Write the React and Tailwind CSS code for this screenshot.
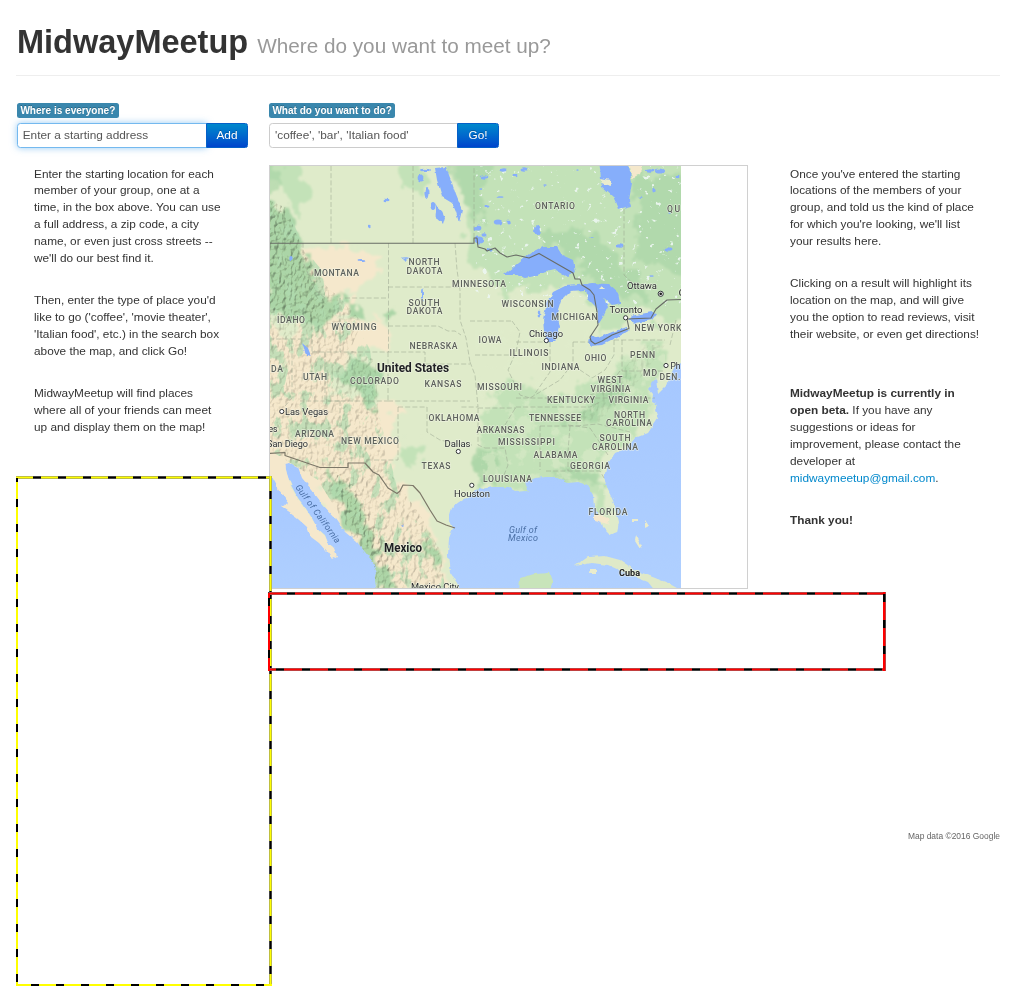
import React from "react";

const GREEN = "#c3e2b8";
const DEEP = "#a5d3a3";
const SAND = "#f5e8cc";
const LAKE = "#86aefb";

// [text, centre x, baseline y, width]
const states = [
  ["ONTARIO", 555, 208.7, 40],
  ["QU", 673.5, 212, 13],
  ["MONTANA", 336.5, 276.2, 45],
  ["NORTH", 424, 265, 31],
  ["DAKOTA", 424.5, 273.5, 36],
  ["MINNESOTA", 479, 286.5, 54],
  ["SOUTH", 424, 305.7, 31],
  ["DAKOTA", 424.5, 314.3, 36],
  ["IDAHO", 291, 323, 28],
  ["WYOMING", 354, 329.5, 45],
  ["WISCONSIN", 527.5, 306.7, 52],
  ["MICHIGAN", 574.5, 319.5, 46],
  ["NEBRASKA", 433.5, 349, 48],
  ["IOWA", 490, 343.2, 23],
  ["ILLINOIS", 529, 356, 39],
  ["NEW YORK", 658, 331.3, 47],
  ["INDIANA", 560.5, 370, 38],
  ["OHIO", 595.5, 361, 22],
  ["PENN", 642.5, 357.5, 25],
  ["DA", 277, 371.5, 12],
  ["UTAH", 315, 379.5, 24],
  ["COLORADO", 374.5, 384.2, 49],
  ["KANSAS", 443, 387, 37],
  ["MISSOURI", 499.5, 389.5, 45],
  ["WEST", 610, 383.3, 25],
  ["VIRGINIA", 610.5, 392, 40],
  ["KENTUCKY", 571, 403.3, 48],
  ["VIRGINIA", 628.5, 403.3, 40],
  ["MD", 650, 376, 14],
  ["DEN.", 670, 379.5, 21],
  ["OKLAHOMA", 454, 421, 51],
  ["TENNESSEE", 555, 420.8, 52],
  ["NORTH", 629.5, 417.5, 31],
  ["CAROLINA", 629, 426, 46],
  ["ARIZONA", 314.5, 437, 39],
  ["NEW MEXICO", 370, 443.7, 58],
  ["ARKANSAS", 500.5, 432.7, 48],
  ["MISSISSIPPI", 526.5, 444.5, 57],
  ["SOUTH", 615, 441.3, 31],
  ["CAROLINA", 615, 450, 46],
  ["ALABAMA", 555.5, 457.5, 44],
  ["TEXAS", 436, 469, 29],
  ["GEORGIA", 590, 468.5, 40],
  ["LOUISIANA", 507.5, 482, 49],
  ["FLORIDA", 608, 515, 39],
];

const cities = [
  ["Ottawa", 642, 289.3, 30],
  ["Toronto", 626, 313.3, 33],
  ["Chicago", 546, 336.8, 34],
  ["Las Vegas", 306.5, 415, 43],
  ["es", 273, 432, 9],
  ["San Diego", 287.5, 447.3, 41],
  ["Dallas", 457.5, 447.3, 26],
  ["Houston", 472, 497.3, 36],
  ["Ph", 675.5, 368.5, 10],
  ["C", 682, 296, 7],
  ["Mexico City", 435, 590, 48],
];

const dots = [
  [625.6, 317.8], [546.3, 340.6], [281.8, 411.5], [458.3, 451.5],
  [471.8, 485.3], [666, 365.5],
];

// small northern lakes: [x, y, rx, ry]
const ponds = [
  [484, 177, 5, 2], [503, 170, 4, 2], [524, 169, 4, 2], [515, 176, 3, 1.5],
  [480, 190, 2, 1], [500, 196, 3, 1], [487, 206, 3, 2], [498, 222, 5, 3],
  [508, 222, 2, 3], [478, 228, 4, 3], [479, 240, 5, 4], [484, 235, 3, 2],
  [489, 250, 3, 2], [537.5, 230.5, 4, 6.5], [577, 170, 2, 1], [545, 185, 2, 1],
  [620, 246, 4, 2], [668, 249, 4, 2], [660, 171, 6, 3], [650, 170, 5, 2],
  [654, 190, 2, 3], [677, 176, 3, 1.5], [592, 237, 2, 1], [641, 198, 2, 1],
  [670, 213, 2, 1], [651, 276, 2, 1], [386, 200, 3, 1.5], [369, 227, 2, 1.5],
  [291, 258, 2, 2.5], [361, 260, 4, 1.2], [425, 170, 6, 1.5], [403, 525, 2, 1],
  [421, 178, 4, 4], [427, 193, 3, 7], [433, 206, 3, 6], [440, 215, 4, 7],
  [405, 258, 5, 1], [405, 260, 2, 2], [423, 295, 1.2, 8], [539, 314, 1.5, 4],
];

const stateLines =
  "M331 166V243M413 166V243M388.5 243V352M345 298H388M388 287H458M388 326H438L448 331H455L461 335M455 243L457 270L460 290V320L466 338L470 362M269 339H312V352M312 352H340M340 298V352H425V364H470M292 339V398L285 406M325 352V401H388M340 401V460M388 352V402M388 401H470M398 407H427V432L440 440L458 444L472 445M398 407V460H365M340 401H300M325 298L315 290L303 262V243M470 362L475 375L478 407H460M478 408H516M470 321H512M512 321L520 332L516 352L508 370L520 395L530 398M475 355H510M516 342H550M550 342V372L534 395M573 342V363L560 380L530 398M573 342H590M614 340V355L605 370L592 378L580 370M614 340H665M622 371H663M622 340V371M620 371L606 390L590 395M516 398H655M516 407H590L600 402M540 426H575L598 424L630 432M540 426V470M570 426L568 452L568 471M485 448H505L508 465L504 475M478 408V445L485 448M505 425L516 407M546 471H600L604 478M568 425L590 428L608 455M624 209V275L640 290M474 238V166M670 345L676 320";

const outlineDash = {
  yellowH: "bg-[repeating-linear-gradient(90deg,#000_0_8px,#ff0_8px_25px)]",
  yellowV: "bg-[repeating-linear-gradient(180deg,#000_0_8px,#ff0_8px_25px)]",
  redH: "bg-[repeating-linear-gradient(90deg,#000_0_8px,#f00_8px_26px)]",
  redV: "bg-[repeating-linear-gradient(180deg,#000_0_8px,#f00_8px_26px)]",
};

function MapArt() {
  return (
    <svg className="block h-[422px] w-[411px]" viewBox="270 166 411 422" role="img" aria-label="Map">
      <defs>
        <filter id="coast" x="-5%" y="-5%" width="110%" height="110%">
          <feTurbulence type="fractalNoise" baseFrequency="0.15" numOctaves="2" seed="4" />
          <feDisplacementMap in="SourceGraphic" scale="4" xChannelSelector="R" yChannelSelector="G" />
        </filter>
        <filter id="rough" x="-10%" y="-10%" width="120%" height="120%">
          <feTurbulence type="fractalNoise" baseFrequency="0.06" numOctaves="4" seed="9" />
          <feDisplacementMap in="SourceGraphic" scale="32" xChannelSelector="R" yChannelSelector="G" />
          <feGaussianBlur stdDeviation="1" />
        </filter>
        <filter id="relief" x="0" y="0" width="100%" height="100%" colorInterpolationFilters="sRGB">
          <feTurbulence type="fractalNoise" baseFrequency="0.26 0.17" numOctaves="3" seed="2" />
          <feDiffuseLighting surfaceScale="2.4" diffuseConstant="1.2" lightingColor="#fffdf6">
            <feDistantLight azimuth="225" elevation="58" />
          </feDiffuseLighting>
          <feComposite operator="in" in2="SourceGraphic" />
        </filter>
        <filter id="woods" x="0" y="0" width="100%" height="100%" colorInterpolationFilters="sRGB">
          <feTurbulence type="fractalNoise" baseFrequency="0.08 0.05" numOctaves="4" seed="16" />
          <feColorMatrix values="0 0 0 0 .69  0 0 0 0 .86  0 0 0 0 .69  9 0 0 0 -4.8" />
          <feComposite operator="in" in2="SourceGraphic" />
        </filter>
        <filter id="clear" x="0" y="0" width="100%" height="100%" colorInterpolationFilters="sRGB">
          <feTurbulence type="fractalNoise" baseFrequency="0.06" numOctaves="4" seed="31" />
          <feColorMatrix values="0 0 0 0 .88  0 0 0 0 .93  0 0 0 0 .8  8 0 0 0 -4.3" />
          <feComposite operator="in" in2="SourceGraphic" />
        </filter>
        <filter id="specks" x="0" y="0" width="100%" height="100%" colorInterpolationFilters="sRGB">
          <feTurbulence type="fractalNoise" baseFrequency="0.16" numOctaves="3" seed="7" />
          <feColorMatrix values="0 0 0 0 .93  0 0 0 0 .97  0 0 0 0 .95  12 0 0 0 -8.2" />
          <feComposite operator="in" in2="SourceGraphic" />
        </filter>
        <linearGradient id="sea" x1="0" y1="0" x2="0" y2="1">
          <stop offset="0" stopColor="#a5c7ff" />
          <stop offset="1" stopColor="#b0d0ff" />
        </linearGradient>
      </defs>
      <rect x="269" y="166" width="413" height="422" fill="#dfebca" />
      <g filter="url(#rough)">
        <path fill={GREEN} d="M255 150H300L305 200L300 225L285 190L255 180ZM455 150H700V320L665 322L640 300L600 335L585 290L560 285L500 296L470 260L468 225L460 190ZM395 150H425V195L405 190Z" />
        <path fill={DEEP} opacity=".6" d="M440 150H490L480 225L462 200ZM535 228L600 235L625 265L650 300L600 290L570 255L540 250ZM630 180L700 170V280L640 260ZM255 150H280V190H260Z" />
        <path fill={SAND} d="M300 248H345L385 262L350 290L340 320L388 325L395 350L345 352L325 395L395 402L400 455L390 470L430 520L448 590H360L330 520L295 470L255 452V330L285 335L310 320L300 290Z" />
        <path fill={GREEN} d="M480 410L512 380L560 395L610 370L645 345L665 345L655 390L645 430L615 450L600 480L612 520L590 500L560 485L520 490L475 490L480 450ZM400 440L420 445L410 470Z" />
        <path fill={DEEP} opacity=".7" d="M560 420L600 395L635 370L625 395L590 422ZM475 450H500L495 485H475ZM545 470H595L600 482H550Z" />
        <path fill={DEEP} opacity=".9" d="M265 200L285 205L300 245L312 275L320 290L340 300L330 325L320 345L312 320L280 315L265 300ZM342 298L358 303L362 318L350 320ZM385 305L395 312L392 320L384 315ZM345 355L365 358L376 375L372 405L358 400L348 385ZM325 465L345 480L375 540L390 588H375L365 550L340 515ZM425 535L435 545L440 575L430 560Z" />
      </g>
      <rect x="475" y="330" width="190" height="165" fill="#fff" filter="url(#clear)" opacity=".5" />
      <rect x="475" y="166" width="207" height="140" fill="#fff" filter="url(#specks)" opacity=".9" />
      <path fill="#fff" filter="url(#woods)" opacity=".7" d="M269 200L290 215L305 250L345 298L370 350L378 410L400 500L440 550L445 588H375L355 540L318 480L269 450Z" />
      <path style={{ mixBlendMode: "multiply" }} opacity=".3" fill="#fff" filter="url(#relief)" d="M269 200L286 208L302 248L325 285L342 300L362 322L350 350L375 360L378 410L388 470L420 515L440 550L445 588H375L355 540L318 480L269 450Z" />
      <path style={{ mixBlendMode: "multiply" }} opacity=".3" fill="#fff" filter="url(#relief)" d="M269 200L286 208L302 248L318 285L325 305L310 325L269 315ZM335 470L350 480L385 545L392 575L375 560L345 515Z" />
      <path style={{ mixBlendMode: "multiply" }} opacity=".15" fill="#fff" filter="url(#relief)" d="M570 425L600 395L645 345L665 345L635 385L600 422Z" />

      <g filter="url(#coast)">
        <path fill="url(#sea)" d="M255 470L272 475L280 490L290 503L282 507L290 512L298 518L308 527L312 537L320 543L328 552L332 558L336 555L333 547L328 543L325 535L317 528L312 518L305 507L298 498L292 487L287 475L285 464L290 463L298 467L302 478L312 490L323 505L335 518L345 532L357 542L365 552L373 562L377 572L375 582L379 600H255Z" />
        <path fill="url(#sea)" d="M465 600L457 583L450 572L448 555L449 538L453 528L449 518L452 508L460 502L468 497L475 490L492 487L508 487L515 491L525 490L529 492L525 483L535 478L545 477L555 477L568 483L578 482L587 485L593 495L594 507L600 517L603 528L610 535L617 532L619 522L615 505L608 490L604 478L607 465L615 453L627 448L635 438L648 433L658 418L655 410L658 405L652 402L653 394L648 388L656 378L658 394L667 385L670 376L676 364L695 355V600Z" />
        {/* Baja California */}
        <path fill={SAND} d="M262 452L285 458L286 470L291 487L298 499L305 508L312 519L318 529L325 536L328 543L334 548L337 556L332 559L327 552L319 543L311 537L307 527L298 519L290 513L281 507L289 503L279 490L271 475L262 468Z" />
        <path fill={LAKE} d="M503 275L518 263L530 253L542 247L557 247L562 255L573 260L575 272L567 277L555 270L542 273L535 276L525 278L515 275ZM545 342L543 320L547 303L553 292L565 286L578 285L592 283L608 284L618 293L620 303L612 305L604 298L608 307L603 317L598 325L596 307L588 299L586 290L570 291L561 300L557 313L560 327L555 342ZM588 343L590 335L598 338L612 332L627 327L630 330L618 337L602 345L592 346ZM627 320L635 315L652 312L657 313L652 320L635 323ZM599 160H628L632 183L629 200L631 206L618 209L613 197L602 187Z" />
        <path fill={LAKE} d="M435 168L446 167L452 183L456 195L462 210L459 223L456 212L452 203L442 197L437 180ZM302 343L308 348L311 356L306 355ZM436 203L445 218L443 225L438 219Z" />
        {ponds.map(([x, y, rx, ry], i) => (
          <ellipse key={i} cx={x} cy={y} rx={rx * 0.85} ry={ry * 0.85} fill={LAKE} />
        ))}
        <path fill="#dfe9c8" d="M575 566L588 557L605 556L620 560L635 570L650 576L668 583L684 592H656L648 582L630 575L608 565L592 563Z" />
        <path fill="#c8e4ba" d="M519 592L520 578L534 574L550 573L553 581L549 592Z" />
        <path fill="#eaeccd" d="M636 535L642 546L640 549L635 541ZM600 178L610 180L611 186L603 184ZM632 519H638V521H632ZM645 520L649 526L645 528ZM591 569H596V574H590ZM602 286L606 290H598Z" />
        <path fill={SAND} d="M629 160H646L640 174L632 178ZM594 520L608 524L610 519L605 516L594 514Z" />
      </g>

      <path d={stateLines} fill="none" stroke="#9aa58f" strokeWidth=".7" strokeDasharray="5 2.2" opacity=".75" />
      <path
        fill="none"
        stroke="#686c66"
        strokeWidth="1.1"
        strokeLinejoin="round"
        d="M269 243.3H474V238L477 238L478 247L485 249L487 251L495 248L500 253L507 257L516 255L529 258L539 253.5L573 273L575 279L580 279L582 285L590 290L594 295L597 312L598 325L590 337L591 341L595 344L602 341L612 335L629 328.5L627 319L651 318L656 309L667 300L682 299.5"
      />
      <path
        fill="none"
        stroke="#7c7768"
        strokeWidth="1.2"
        strokeLinejoin="round"
        d="M269 453.5L285 452.5V455.5L320 467.5H348V463H365L373 472L379 475L388 488L397 493.5L400 491L403 485L413 485.5L420 493L430 510L437 521L446 525L455 528"
      />

      <g fontFamily="Roboto, sans-serif" textAnchor="middle" stroke="#f4f6e8" strokeOpacity=".6" strokeWidth="1.4" paintOrder="stroke" strokeLinejoin="round">
        <g fontSize="8.6" fontWeight="500" fill="#5d615c">
          {states.map(([t, x, y, w], i) => (
            <text key={i} x={x} y={y} textLength={w}>{t}</text>
          ))}
        </g>
        <g fontSize="9.8" fill="#2c2e32">
          {cities.map(([t, x, y, w], i) => (
            <text key={i} x={x} y={y} textLength={w} lengthAdjust="spacingAndGlyphs">{t}</text>
          ))}
        </g>
        <g fontWeight="700" fill="#202124">
          <text x="413" y="372" fontSize="12" textLength="72" lengthAdjust="spacingAndGlyphs">United States</text>
          <text x="403" y="552.3" fontSize="12" textLength="38" lengthAdjust="spacingAndGlyphs">Mexico</text>
          <text x="629.5" y="576" fontSize="9.6" textLength="21" lengthAdjust="spacingAndGlyphs">Cuba</text>
        </g>
      </g>
      <g fontFamily="Roboto, sans-serif" fontStyle="italic" textAnchor="middle" fill="#4a6fa5">
        <text x="523" y="532.5" fontSize="9" textLength="28">Gulf of</text>
        <text x="523" y="541" fontSize="9" textLength="30">Mexico</text>
        <text transform="translate(315.5 515.5) rotate(54)" fontSize="9" textLength="70">Gulf of California</text>
      </g>
      <g fill="#fff" stroke="#33363a" strokeWidth="1">
        {dots.map(([x, y], i) => (
          <circle key={i} cx={x} cy={y} r="2.1" />
        ))}
        <circle cx="660.7" cy="293.8" r="2.6" />
      </g>
      <circle cx="660.7" cy="293.8" r="1.4" fill="#222" />
    </svg>
  );
}

function SearchField({ label, text, button, focused }) {
  return (
    <div>
      <div className="flex h-[15px]">
        <span className="h-[15px] rounded-[2.5px] bg-[#3a87ad] px-[3.4px] text-[10.05px] leading-[15px] font-bold whitespace-nowrap text-white [text-shadow:0_-1px_0_rgba(0,0,0,0.25)]">
          {label}
        </span>
      </div>
      <div className="mt-[4.5px] flex h-[25.5px]">
        <div
          className={
            focused
              ? "flex w-[189.5px] items-center rounded-l-[3.4px] border border-[#74b9ef] bg-white pl-[4.7px] text-[11.82px] text-[#555] shadow-[0_0_7px_rgba(82,168,236,0.6)]"
              : "flex w-[189px] items-center rounded-l-[3.4px] border border-[#ccc] bg-white pl-[5px] text-[11.82px] text-[#555]"
          }
        >
          {text}
        </div>
        <button
          className={`${focused ? "w-[42.6px]" : "w-[41.6px]"} -ml-[0.8px] rounded-r-[2.5px] border border-[#0560c8] bg-linear-to-b from-[#0088cc] to-[#0044cc] text-center text-[11.82px] leading-[23px] text-white [text-shadow:0_-1px_0_rgba(0,0,0,0.25)]`}
        >
          {button}
        </button>
      </div>
    </div>
  );
}

export default function App() {
  return (
    <div className="relative h-[990px] w-[1017px] overflow-hidden bg-white pr-[17px] pl-[17px] font-['Liberation_Sans',Arial,sans-serif] text-[11.82px] leading-[16.88px] text-[#333]">
      <header className="-ml-px h-[76px] border-b border-[#eee] pt-[25px] pl-px">
        <h1 className="text-[32.5px] leading-[34px] font-bold whitespace-nowrap">
          MidwayMeetup{" "}
          <small className="text-[20.72px] font-normal text-[#999]">Where do you want to meet up?</small>
        </h1>
      </header>

      <main className="flex pt-[27px]">
        <section className="w-[252px] shrink-0">
          <SearchField label="Where is everyone?" text="Enter a starting address" button="Add" focused />
          <div className="mt-[17.6px] space-y-[25.3px] pl-[17px] whitespace-nowrap">
            <p>
              Enter the starting location for each<br />member of your group, one at a<br />time, in the box above. You can use<br />a full address, a zip code, a city<br />name, or even just cross streets --<br />we'll do our best find it.
            </p>
            <p>
              Then, enter the type of place you'd<br />like to go ('coffee', 'movie theater',<br />'Italian food', etc.) in the search box<br />above the map, and click Go!
            </p>
            <p>
              MidwayMeetup will find places<br />where all of your friends can meet<br />up and display them on the map!
            </p>
          </div>
        </section>

        <section className="w-[480px] shrink-0">
          <SearchField label="What do you want to do?" text="'coffee', 'bar', 'Italian food'" button="Go!" />
          <div className="-ml-[0.5px] mt-[17px] h-[424px] w-[479.5px] border border-[#d0d0d0]">
            <MapArt />
          </div>
        </section>

        <aside className="pt-[62.6px] pl-[41px] whitespace-nowrap">
          <p>
            Once you've entered the starting<br />locations of the members of your<br />group, and told us the kind of place<br />for which you're looking, we'll list<br />your results here.
          </p>
          <p className="mt-[25.3px]">
            Clicking on a result will highlight its<br />location on the map, and will give<br />you the option to read reviews, visit<br />their website, or even get directions!
          </p>
          <p className="mt-[42.5px]">
            <b>MidwayMeetup is currently in<br />open beta.</b> If you have any<br />suggestions or ideas for<br />improvement, please contact the<br />developer at<br />
            <a className="text-[#0088cc]">midwaymeetup@gmail.com</a>.
          </p>
          <p className="mt-[25.3px] font-bold">Thank you!</p>
        </aside>
      </main>

      <footer className="mt-[241px] text-right text-[8.45px] leading-[12px] text-[#666]">Map data ©2016 Google</footer>

      <div className="pointer-events-none absolute top-[476px] left-[16px] z-20 h-[510px] w-[256px]">
        <i className={`absolute top-0 left-0 h-[3px] w-full border-y border-[#808080]/50 bg-position-[17px_0] bg-size-[25px_100%] ${outlineDash.yellowH}`} />
        <i className={`absolute top-[2px] left-0 h-[508px] w-[2px] bg-position-[0_-4px] bg-size-[100%_25px] ${outlineDash.yellowV}`} />
        <i className={`absolute top-0 right-0 h-full w-[3px] border-x border-[#808080]/50 bg-position-[0_15px] bg-size-[100%_25px] ${outlineDash.yellowV}`} />
        <i className={`absolute bottom-0 left-0 h-[2px] w-full bg-position-[15px_0] bg-size-[25px_100%] ${outlineDash.yellowH}`} />
      </div>
      <div className="pointer-events-none absolute top-[592px] left-[268px] z-20 h-[79px] w-[618px]">
        <i className={`absolute top-0 left-0 h-[3px] w-full border-y border-[#808080]/50 bg-position-[19px_0] bg-size-[26px_100%] ${outlineDash.redH}`} />
        <i className={`absolute bottom-0 left-0 h-[3px] w-full border-y border-[#808080]/50 bg-position-[8px_0] bg-size-[26px_100%] ${outlineDash.redH}`} />
        <i className={`absolute top-[1px] left-0 h-[78px] w-[2px] bg-position-[0_5px] bg-size-[100%_26px] ${outlineDash.redV}`} />
        <i className={`absolute top-0 right-0 h-full w-[3px] border-r border-[#808080]/50 bg-position-[0_2px] bg-size-[100%_26px] ${outlineDash.redV}`} />
      </div>
    </div>
  );
}
